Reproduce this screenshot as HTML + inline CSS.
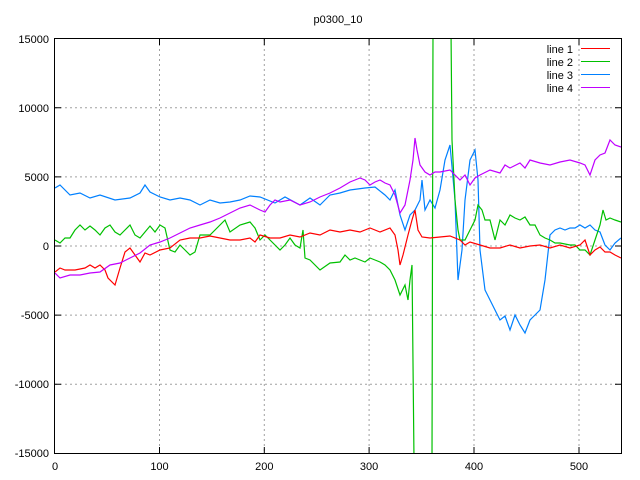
<!DOCTYPE html>
<html><head><style>html,body{margin:0;width:640px;height:480px;overflow:hidden;background:#fff}svg{display:block}text{font-family:"Liberation Sans",sans-serif;font-size:11px;fill:#000}</style></head><body>
<svg width="640" height="480" viewBox="0 0 640 480">
<defs><clipPath id="c"><rect x="55" y="39" width="566" height="414"/></clipPath></defs>
<g stroke="#a0a0a0" stroke-dasharray="2,3" stroke-width="1">
<path d="M55 107.7H621M55 176.9H621M55 246H621M55 315.1H621M55 384.3H621M159.5 39V453M264.3 39V453M369.1 39V453M474 39V453M579 39V453"/>
</g>
<g stroke="#000" stroke-width="1">
<path d="M55 107.7h6M615 107.7h6M55 176.9h6M615 176.9h6M55 246h6M615 246h6M55 315.1h6M615 315.1h6M55 384.3h6M615 384.3h6M159.5 453v-6M159.5 39v6M264.3 453v-6M264.3 39v6M369.1 453v-6M369.1 39v6M474 453v-6M474 39v6M579 453v-6M579 39v6"/>
<rect x="54.5" y="38.5" width="567" height="415" fill="none"/>
</g>
<text x="338" y="23" text-anchor="middle">p0300_10</text>
<g text-anchor="end">
<text x="49" y="43">15000</text><text x="49" y="112">10000</text><text x="49" y="181">5000</text><text x="49" y="250">0</text><text x="49" y="319">-5000</text><text x="49" y="388">-10000</text><text x="49" y="457">-15000</text>
</g>
<g text-anchor="middle">
<text x="55" y="470">0</text><text x="159.5" y="470">100</text><text x="264.3" y="470">200</text><text x="369.1" y="470">300</text><text x="474" y="470">400</text><text x="579" y="470">500</text>
</g>
<g text-anchor="end" style="font-family:'Liberation Mono',monospace;font-size:12px">
<text x="573" y="53">line 1</text><text x="573" y="66">line 2</text><text x="573" y="79">line 3</text><text x="573" y="92">line 4</text>
</g>
<path d="M581 48.5h29" stroke="#ff0000"/><path d="M581 61.5h29" stroke="#00c000"/><path d="M581 74.5h29" stroke="#0080ff"/><path d="M581 87.5h29" stroke="#c000ff"/>
<g clip-path="url(#c)" fill="none" stroke-width="1.2">
<polyline stroke="#0080ff" points="55,188 60,185 70,195 80,193 90,198 100,195 115,200 130,198 140,193 145,185 150,192 160,197 170,200 180,198 190,200 200,205 210,200 220,203 230,202 240,200 250,196 260,197 275,203 285,197 300,205 310,198 320,205 330,195 340,193 350,190 365,188 375,187 385,195 390,200 395,190 400,215 405,230 410,215 415,210 420,200 422,180 425,210 430,200 435,208 440,190 445,160 450,145 455,200 458,280 462,250 465,200 470,160 475,150 478,180 480,250 485,290 490,300 495,310 500,320 505,316 510,330 515,315 520,325 525,333 530,320 535,315 540,310 545,280 550,235 555,230 560,228 565,230 570,228 575,228 580,225 585,228 590,225 595,230 600,232 605,245 610,250 615,243 621,238"/>
<polyline stroke="#00c000" points="55,240 60,243 65,238 70,238 75,230 80,225 85,230 90,226 95,230 100,235 105,228 110,225 115,232 120,235 125,230 130,225 135,235 140,238 145,232 150,226 155,232 160,225 165,228 170,250 175,252 180,245 185,250 190,255 195,252 200,235 210,235 220,225 225,220 230,232 240,225 250,222 255,228 260,240 265,235 270,240 275,245 280,250 285,245 290,238 295,245 300,248 303,230 305,258 310,260 320,270 330,263 340,262 345,255 350,260 355,258 360,260 365,262 370,258 375,260 380,262 385,265 390,270 395,280 400,295 405,285 408,300 410,280 412,265 414,460 432,460 433,30 451,30 452,140 455,200 458,230 460,240 465,240 470,230 475,220 478,205 482,210 485,220 490,220 495,240 500,220 505,225 510,215 515,218 520,220 525,217 530,225 535,225 540,235 545,238 550,240 555,243 560,243 570,245 575,245 580,250 585,250 590,255 595,240 600,225 603,210 606,220 610,218 615,220 621,222"/>
<polyline stroke="#ff0000" points="55,272 60,268 65,270 75,270 85,268 90,265 95,268 100,265 105,270 108,278 115,285 120,268 125,252 130,248 135,255 140,262 145,253 150,255 160,250 170,248 180,240 190,238 200,238 210,236 220,238 230,240 240,240 250,238 255,242 260,235 270,238 280,238 290,235 300,237 310,233 320,235 330,230 340,232 350,230 360,232 370,228 380,232 390,228 395,235 398,250 400,265 403,255 408,235 412,220 415,210 418,230 422,237 430,238 440,237 450,236 460,240 465,245 470,242 480,245 490,248 500,248 510,245 520,248 530,246 540,245 550,248 560,245 570,248 580,245 585,240 590,255 595,250 600,247 605,252 610,252 615,255 621,258"/>
<polyline stroke="#c000ff" points="55,273 60,278 70,275 80,275 90,273 100,272 110,265 120,263 130,258 140,253 150,245 160,242 170,238 180,233 190,228 200,225 210,222 220,218 230,213 240,208 250,205 260,210 265,212 270,205 275,200 280,202 290,200 300,205 310,202 320,197 330,193 340,188 350,182 355,180 360,178 365,180 370,185 375,182 380,180 385,183 390,185 395,195 400,213 405,205 410,180 413,160 415,138 417,150 420,165 425,172 430,175 435,172 440,172 450,170 455,175 460,180 465,175 470,185 475,178 480,175 490,170 500,173 505,165 510,168 520,163 525,168 530,160 540,163 550,165 560,162 570,160 580,163 585,165 590,175 595,160 600,155 605,153 610,140 615,145 621,147"/>
</g>
</svg>
</body></html>
